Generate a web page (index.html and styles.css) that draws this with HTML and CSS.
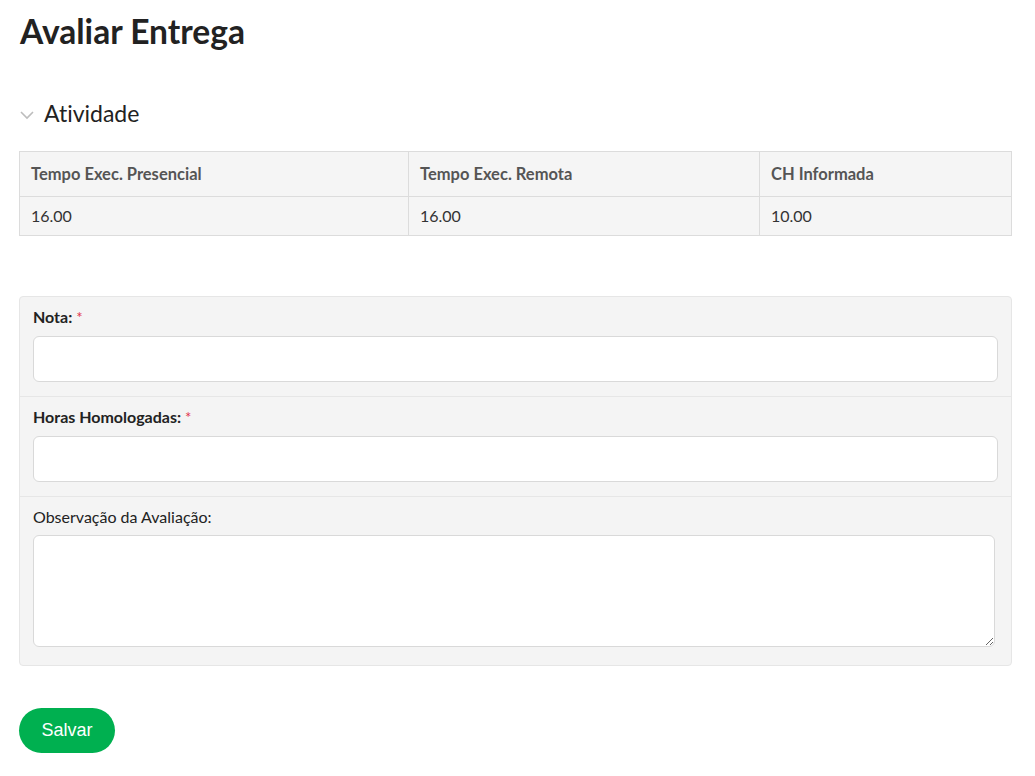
FILE: index.html
```html
<!DOCTYPE html>
<html lang="pt-BR">
<head>
<meta charset="UTF-8" />
<meta name="viewport" content="width=device-width, initial-scale=1" />
<title>Avaliar Entrega</title>
<link rel="stylesheet" href="styles.css">
</head>
<body>
  <main class="page">
    <h1 class="title">Avaliar Entrega</h1>

    <section class="section">
      <h2 class="section-head">
        <svg class="chev" width="14" height="14" viewBox="0 0 14 14"><path d="M1 4 L7 10 L13 4" fill="none" stroke="#bdbdbd" stroke-width="1.6"/></svg>
        Atividade
      </h2>
      <table class="info">
        <thead>
          <tr>
            <th class="c1">Tempo Exec. Presencial</th>
            <th class="c2">Tempo Exec. Remota</th>
            <th>CH Informada</th>
          </tr>
        </thead>
        <tbody>
          <tr>
            <td>16.00</td>
            <td>16.00</td>
            <td>10.00</td>
          </tr>
        </tbody>
      </table>
    </section>

    <form class="form" onsubmit="return false">
      <div class="field">
        <label class="lbl req" for="nota">Nota: <span>*</span></label>
        <input class="inp" id="nota" type="text">
      </div>
      <div class="field">
        <label class="lbl req" for="horas">Horas Homologadas: <span>*</span></label>
        <input class="inp" id="horas" type="text">
      </div>
      <div class="field last">
        <label class="lbl" for="obs">Observação da Avaliação:</label>
        <textarea class="txt" id="obs"></textarea>
      </div>
    </form>

    <button class="save" type="button">Salvar</button>
  </main>
</body>
</html>
```

FILE: styles.css
```css
*{box-sizing:border-box}
body{
  margin:0;
  font-family: Lato, "Open Sans", sans-serif;
  font-variant-ligatures:none;
  color:#222;
  background:#fff;
}
.page{
  padding:11px 23px 0 19px;
}
.title{
  margin:0 0 0 1px;
  font-size:33.6px;
  line-height:1.2;
  font-weight:700;
  color:#222;
}

/* Atividade */
.section-head{
  margin:49px 0 23px 1px;
  font-size:23px;
  font-weight:400;
  line-height:1.2;
  color:#222;
  display:flex;
  align-items:center;
  gap:10px;
}
.chev{ margin-top:1px }
.info{
  width:100%;
  border-collapse:collapse;
  background:#f5f5f5;
  font-size:16px;
}
.info th, .info td{
  border:1px solid #dcdcdc;
  text-align:left;
  padding:0 11px;
}
.info th{
  height:45px;
  font-size:16.5px;
  font-weight:700;
  color:#555;
}
.info td{
  height:39px;
  color:#333;
}
.info .c1{ width:389px }
.info .c2{ width:351px }

/* Formulário */
.form{
  margin-top:60px;
  background:#f4f4f4;
  border:1px solid #e6e6e6;
  border-radius:4px;
}
.field{
  padding:11px 13px 14px 13px;
  border-bottom:1px solid #e6e6e6;
}
.field.last{
  border-bottom:0;
  padding-bottom:18px;
}
.lbl{
  display:block;
  font-size:16px;
  line-height:18px;
  margin-bottom:10px;
  color:#222;
}
.last .lbl{ margin-bottom:9px }
.lbl.req{ font-weight:700 }
.lbl span{ color:#e2334b; font-weight:400; font-size:15px }
.inp{
  display:block;
  width:100%;
  height:46px;
  border:1px solid #d9d9d9;
  border-radius:6px;
  background:#fff;
  font:inherit;
  padding:0 10px;
}
.txt{
  display:block;
  width:962px;
  max-width:100%;
  height:112px;
  border:1px solid #d9d9d9;
  border-radius:6px;
  background:#fff;
  font:inherit;
  padding:8px 10px;
  resize:vertical;
}

.save{
  margin-top:42px;
  width:96px;
  height:45px;
  border:0;
  border-radius:23px;
  background:#00b050;
  color:#fff;
  font-family:"Liberation Sans", Arial, sans-serif;
  font-size:18px;
  cursor:pointer;
}
```
